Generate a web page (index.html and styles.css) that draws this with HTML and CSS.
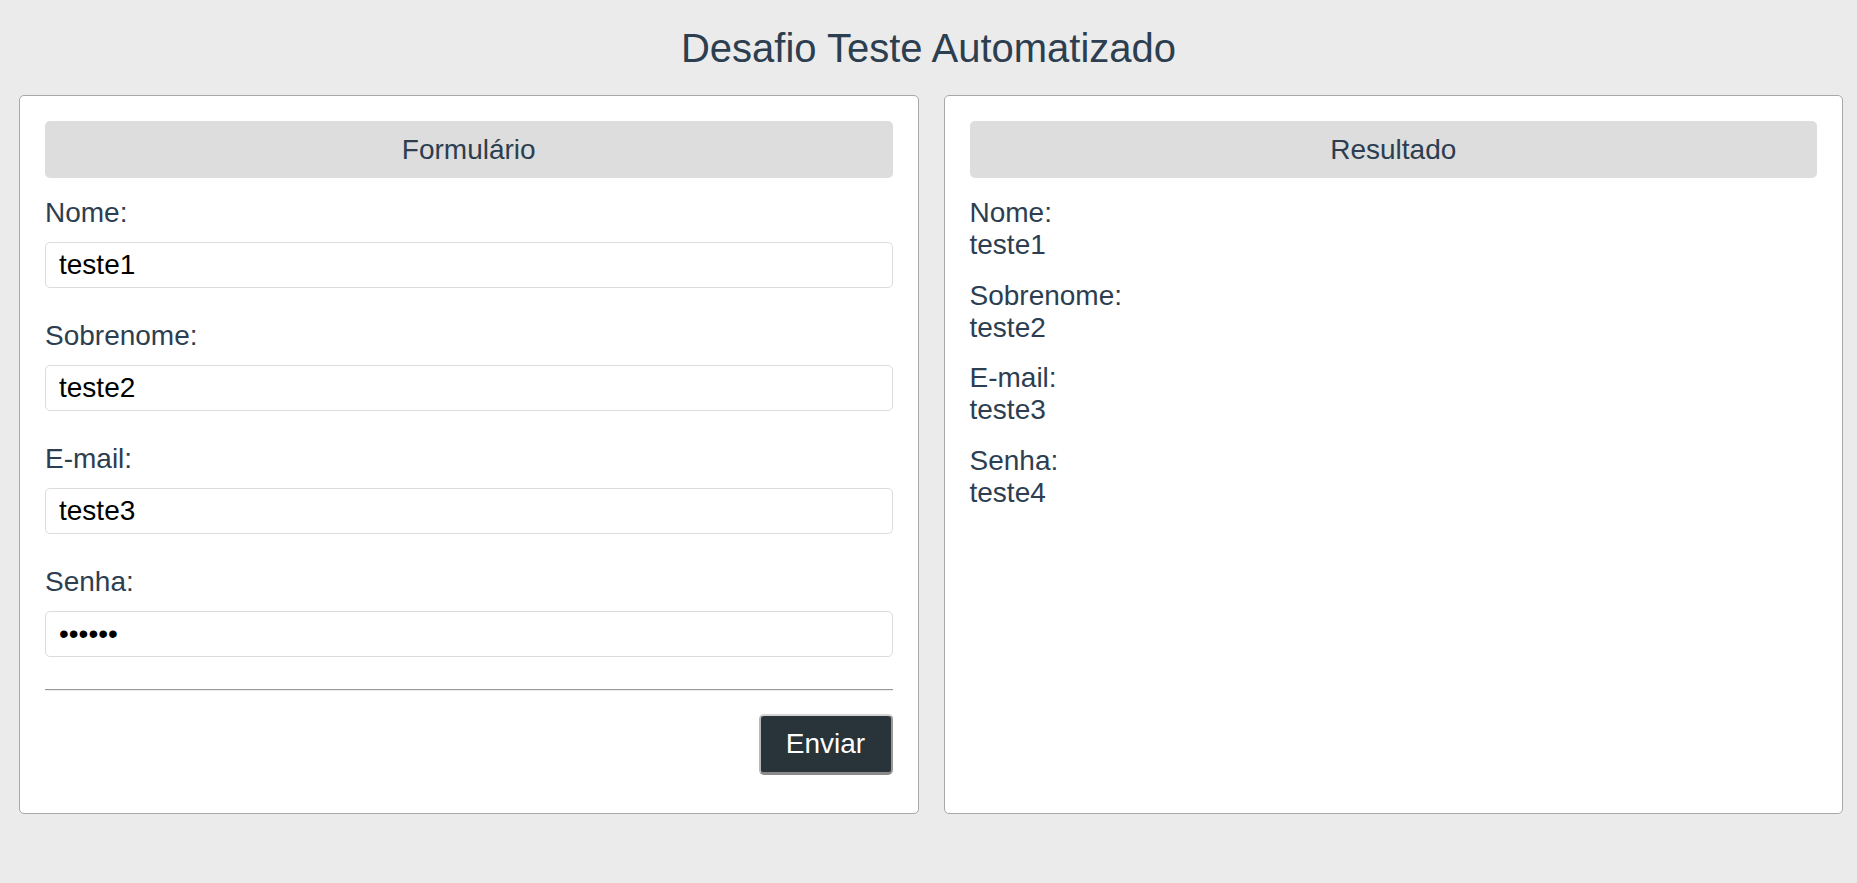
FILE: index.html
```html
<!DOCTYPE html>
<html lang="pt-BR">
<head>
<meta charset="utf-8">
<title>Desafio Teste Automatizado</title>
<link rel="stylesheet" href="styles.css">
</head>
<body>
  <h1 class="title">Desafio Teste Automatizado</h1>
  <main class="panels">
    <section class="card">
      <div class="card-header">Formulário</div>
      <form class="form">
        <div class="field">
          <label class="field-label" for="nome">Nome:</label>
          <input class="field-input" id="nome" type="text" value="teste1">
        </div>
        <div class="field">
          <label class="field-label" for="sobrenome">Sobrenome:</label>
          <input class="field-input" id="sobrenome" type="text" value="teste2">
        </div>
        <div class="field">
          <label class="field-label" for="email">E-mail:</label>
          <input class="field-input" id="email" type="text" value="teste3">
        </div>
        <div class="field">
          <label class="field-label" for="senha">Senha:</label>
          <input class="field-input" id="senha" type="password" value="teste4">
        </div>
        <hr class="divider">
        <div class="actions">
          <button class="submit" type="button">Enviar</button>
        </div>
      </form>
    </section>
    <section class="card">
      <div class="card-header">Resultado</div>
      <div class="results">
        <div class="result-item"><div>Nome:</div><div>teste1</div></div>
        <div class="result-item"><div>Sobrenome:</div><div>teste2</div></div>
        <div class="result-item"><div>E-mail:</div><div>teste3</div></div>
        <div class="result-item"><div>Senha:</div><div>teste4</div></div>
      </div>
    </section>
  </main>
</body>
</html>
```
FILE: styles.css
```css
* { box-sizing: border-box; }

html, body {
  margin: 0;
  padding: 0;
  background: #ebebeb;
  font-family: "Liberation Sans", Arial, sans-serif;
  color: #2c3e50;
}

.title {
  margin: 25px 0 24px;
  font-size: 40px;
  font-weight: normal;
  line-height: 46px;
  text-align: center;
  color: #2c3e50;
}

.panels {
  display: flex;
  gap: 25px;
  padding: 0 14px 0 19px;
  align-items: stretch;
}

.card {
  flex: 1 1 0;
  background: #ffffff;
  border: 1px solid #a8a8a8;
  border-radius: 5px;
  padding: 25px 25px 38px;
}

.card-header {
  background: #dddddd;
  border-radius: 5px;
  padding: 13px 0 12px;
  font-size: 28px;
  line-height: 32px;
  text-align: center;
  color: #2c3e50;
  margin-bottom: 19px;
}

.form {
  margin: 0;
}

.field {
  display: flex;
  flex-direction: column;
}

.field-label {
  font-size: 28px;
  line-height: 32px;
  color: #2c3e50;
}

.field-input {
  margin: 13px 0 32px;
  height: 46px;
  padding: 0 13px;
  border: 1px solid #dcdcdc;
  border-radius: 5px;
  font-family: "Liberation Sans", Arial, sans-serif;
  font-size: 28px;
  color: #000000;
  background: #ffffff;
  outline: none;
}

.divider {
  margin: 0;
  height: 0;
  border: 0;
  border-top: 1px solid #9a9a9a;
  border-bottom: 1px solid #ececec;
}

.actions {
  display: flex;
  justify-content: flex-end;
  margin-top: 23px;
}

.submit {
  width: 134px;
  height: 61px;
  padding: 0;
  background: #28333a;
  color: #ffffff;
  font-family: "Liberation Sans", Arial, sans-serif;
  font-size: 28px;
  line-height: 32px;
  border: 2px solid;
  border-color: #d4d4d4 #9a9a9a #8a8a8a #b8b8b8;
  border-bottom-width: 3px;
  border-radius: 5px;
}

.results {
  display: flex;
  flex-direction: column;
  gap: 18.5px;
}

.result-item {
  font-size: 28px;
  line-height: 32px;
  color: #2c3e50;
}
```
